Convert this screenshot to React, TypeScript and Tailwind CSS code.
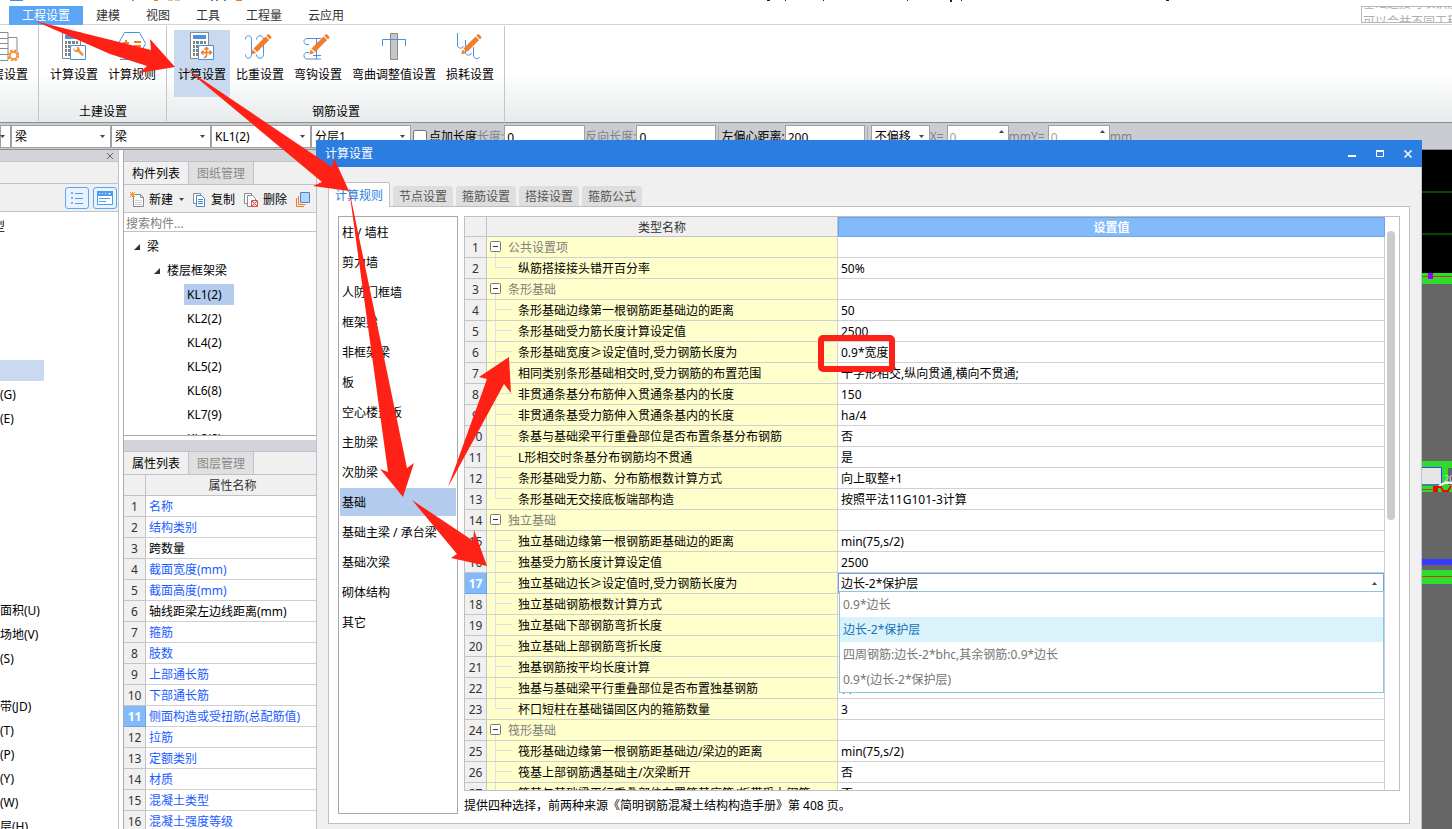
import { useState } from "react";
import type { ReactNode } from "react";

const menuTabs = ["工程设置", "建模", "视图", "工具", "工程量", "云应用"];

const moduleRows = [
    "构件类型", "", "", "", "", "", "selected", "(G)", "(E)", "", "", "", "", "", "", "",
    "面积(U)", "场地(V)", "(S)", "", "带(JD)", "(T)", "(P)", "(Y)", "(W)", "层(H)",
];

const components = ["KL1(2)", "KL2(2)", "KL4(2)", "KL5(2)", "KL6(8)", "KL7(9)", "KL8(8)"];

const properties = [
    { name: "名称", blue: true },
    { name: "结构类别", blue: true },
    { name: "跨数量", blue: false },
    { name: "截面宽度(mm)", blue: true },
    { name: "截面高度(mm)", blue: true },
    { name: "轴线距梁左边线距离(mm)", blue: false },
    { name: "箍筋", blue: true },
    { name: "肢数", blue: true },
    { name: "上部通长筋", blue: true },
    { name: "下部通长筋", blue: true },
    { name: "侧面构造或受扭筋(总配筋值)", blue: true },
    { name: "拉筋", blue: true },
    { name: "定额类别", blue: true },
    { name: "材质", blue: true },
    { name: "混凝土类型", blue: true },
    { name: "混凝土强度等级", blue: true },
];

const categories = [
    "柱 / 墙柱", "剪力墙", "人防门框墙", "框架梁", "非框架梁", "板", "空心楼盖板",
    "主肋梁", "次肋梁", "基础", "基础主梁 / 承台梁", "基础次梁", "砌体结构", "其它",
];

const dialogTabs = ["计算规则", "节点设置", "箍筋设置", "搭接设置", "箍筋公式"];

type Setting = { name: string; value?: string; group?: boolean; last?: boolean };

const settings: Setting[] = [
    { name: "公共设置项", group: true },
    { name: "纵筋搭接接头错开百分率", value: "50%", last: true },
    { name: "条形基础", group: true },
    { name: "条形基础边缘第一根钢筋距基础边的距离", value: "50" },
    { name: "条形基础受力筋长度计算设定值", value: "2500" },
    { name: "条形基础宽度≥设定值时,受力钢筋长度为", value: "0.9*宽度" },
    { name: "相同类别条形基础相交时,受力钢筋的布置范围", value: "十字形相交,纵向贯通,横向不贯通;" },
    { name: "非贯通条基分布筋伸入贯通条基内的长度", value: "150" },
    { name: "非贯通条基受力筋伸入贯通条基内的长度", value: "ha/4" },
    { name: "条基与基础梁平行重叠部位是否布置条基分布钢筋", value: "否" },
    { name: "L形相交时条基分布钢筋均不贯通", value: "是" },
    { name: "条形基础受力筋、分布筋根数计算方式", value: "向上取整+1" },
    { name: "条形基础无交接底板端部构造", value: "按照平法11G101-3计算", last: true },
    { name: "独立基础", group: true },
    { name: "独立基础边缘第一根钢筋距基础边的距离", value: "min(75,s/2)" },
    { name: "独基受力筋长度计算设定值", value: "2500" },
    { name: "独立基础边长≥设定值时,受力钢筋长度为" },
    { name: "独立基础钢筋根数计算方式" },
    { name: "独立基础下部钢筋弯折长度" },
    { name: "独立基础上部钢筋弯折长度" },
    { name: "独基钢筋按平均长度计算" },
    { name: "独基与基础梁平行重叠部位是否布置独基钢筋", value: "否" },
    { name: "杯口短柱在基础锚固区内的箍筋数量", value: "3", last: true },
    { name: "筏形基础", group: true },
    { name: "筏形基础边缘第一根钢筋距基础边/梁边的距离", value: "min(75,s/2)" },
    { name: "筏基上部钢筋遇基础主/次梁断开", value: "否" },
    { name: "筏基与基础梁平行重叠部位布置筏基底筋/板带受力钢筋", value: "否" },
];

const lengthOptions = ["0.9*边长", "边长-2*保护层", "四周钢筋:边长-2*bhc,其余钢筋:0.9*边长", "0.9*(边长-2*保护层)"];

function Caret({ className = "" }: { className?: string }) {
    return (
        <svg viewBox="0 0 5 3" className={`h-[3px] w-[5px] ${className}`} fill="#444">
            <path d="M0 0h5L2.5 3z" />
        </svg>
    );
}

function Pencil() {
    return (
        <g fill="#f07d2a">
            <path d="M8.500 17.500l12-12 3.600 3.600-12 12z" />
            <path d="M21.300 4.700l1.300-1.300a1 1 0 0 1 1.400 0l2.200 2.200a1 1 0 0 1 0 1.400l-1.300 1.300z" />
            <path d="M7.700 18.400l3.500 3.500-5 1.500z" />
        </g>
    );
}

function Calculator({ children }: { children: ReactNode }) {
    return (
        <g transform="translate(1 0)">
            <path d="M2.500 1.500h18v26h-18z" fill="#fff" stroke="#858b8e" />
            <path d="M5 4h13v4H5z" fill="#4a8fe2" />
            <path
                d="M5 10h2v3H5zM8 10h3v3H8zM12 10h3v3h-3zM16 10h2v3h-2zM5 14h2v3H5zM8 14h3v3H8zM5 18h2v3H5zM8 18h3v3H8zM5 22h2v3H5zM8 22h3v3H8z"
                fill="#7d8589"
            />
            <path d="M10.500 14.500h15v14h-15z" fill="#fff" stroke="#4a8fe2" />
            {children}
        </g>
    );
}

const ribbonIcons: Record<string, ReactNode> = {
    楼层设置: (
        <>
            <path d="M-2 1.500h21v28H-2M-2 7.500h21M-2 12.500h21M-2 17.500h21M-2 23.500h21M19 6.500h9v16" fill="none" stroke="#858b8e" />
            <circle cx="24.500" cy="24.500" r="5" fill="#fff" stroke="#f0923a" strokeWidth="2" strokeDasharray="2.500 1.400" />
            <circle cx="24.500" cy="24.500" r="3.600" fill="#fff" stroke="#f0923a" strokeWidth="1.600" />
        </>
    ),
    土建计算: (
        <Calculator>
            <path d="M13 17l2.200 2.200 1.800-.8.300-1.600-.9-.9c2.200-.4 3.800 1.200 3.400 3.200l3.500 3.600c1 1-.700 2.800-1.800 1.800l-3.500-3.500c-2.600.8-5.300-1.400-5-4z" fill="#f0923a" />
        </Calculator>
    ),
    计算规则: (
        <>
            <path d="M5.500 13.500l-4-1 6-11h15l6 11-6 12h-15z" fill="#fff" stroke="#4a8fe2" />
            <path d="M6 12h6M9 9v6M17 11h7M17 15h7" stroke="#f07d2a" strokeWidth="2" />
            <path d="M3 28.500h24" stroke="#4a8fe2" />
        </>
    ),
    钢筋计算: (
        <Calculator>
            <path
                d="M18.500 17v7.500q0 2-2.500 2M13.500 21.500h10M16.500 18.500l2-2 2 2M15.500 19.500l-2 2 2 2M21.500 19.500l2 2-2 2"
                fill="none"
                stroke="#f07d2a"
                strokeWidth="1.500"
            />
        </Calculator>
    ),
    比重设置: (
        <>
            <path
                d="M.500 8.500c0-5 6-5 6 0v15c0 5-6 5-6 0M18.500 8.500c0-5-7-5-7 0M18.500 14v9.500c0 5-7 5-7 0M18.500 8.500v5"
                fill="none"
                stroke="#4a8fe2"
            />
            <Pencil />
        </>
    ),
    弯钩设置: (
        <>
            <path
                d="M17 7.500H4c-4 0-4 6 0 6h2M6 21.500H4c-4 0-4 6.500 0 6.500h14M13.500 8v20M11 7.500h7M10 24.500h8"
                fill="none"
                stroke="#4a8fe2"
            />
            <Pencil />
        </>
    ),
    弯曲调整值设置: (
        <>
            <path d="M11.500 2.500h7v26h-7z" fill="#c3c7ca" stroke="#858b8e" />
            <path d="M3.500 15V8.500h23V15" fill="none" stroke="#4a8fe2" />
        </>
    ),
    损耗设置: (
        <>
            <path
                d="M2.500 2v12c0 4 5 4 6 1M10.500 9v12c0 4 5 4 6 1M18.500 16v8c0 4 5 5 6 2"
                fill="none"
                stroke="#4a8fe2"
            />
            <Pencil />
        </>
    ),
};

function RibbonButton({ icon, label, active }: { icon: string; label: string; active?: boolean }) {
    return (
        <button className={`flex h-[67px] shrink-0 flex-col items-center px-1 ${active ? "bg-[#c9d9ef]" : ""}`}>
            <svg viewBox="0 0 30 30" className="mt-px h-[30px] w-[30px]">
                {ribbonIcons[icon]}
            </svg>
            <span className="mt-[6px] leading-4">{label}</span>
        </button>
    );
}

function RibbonGroup({ title, children }: { title: string; children: ReactNode }) {
    return (
        <section className="flex shrink-0 flex-col border-r border-[#c4c6c8] pt-1 pr-[6px] pl-[7px]">
            <div className="flex gap-[2px]">{children}</div>
            <h2 className="mt-auto pb-px text-center leading-4">{title}</h2>
        </section>
    );
}

function ToolSelect({ label, value, width }: { label: string; value: string; width: string }) {
    return (
        <div className={`relative h-[23px] shrink-0 ${width}`}>
            <select aria-label={label} className="h-full w-full appearance-none border border-[#a0a0a0] bg-white pt-[2px] pl-[3px]">
                <option>{value}</option>
            </select>
            <Caret className="pointer-events-none absolute top-[10px] right-[6px]" />
        </div>
    );
}

function ToolInput({ label, value, width, muted, spin }: { label: string; value: string; width: string; muted?: boolean; spin?: boolean }) {
    return (
        <label className="flex shrink-0 items-center">
            <span className={`pt-[2px] ${muted ? "text-[#808488]" : ""} ${spin ? "pr-[3px]" : ""}`}>{label}</span>
            <span className={`relative h-[23px] ${width}`}>
                <input
                    defaultValue={value}
                    className={`h-full w-full border border-[#a0a0a0] bg-white pt-[2px] pl-[2px] ${spin ? "text-[#a0a0a0]" : ""}`}
                />
                {spin && <Caret className="absolute top-[5px] right-[5px] rotate-180" />}
            </span>
        </label>
    );
}

function PanelTabs({ tabs }: { tabs: string[] }) {
    return (
        <div role="tablist" className="flex h-[23px] shrink-0 border-b border-[#bfc2c8] bg-[#f0f0f0]">
            {tabs.map((tab, i) => (
                <button
                    key={tab}
                    role="tab"
                    aria-selected={i === 0}
                    className={`px-2 pt-[2px] ${i === 0 ? "" : "border-x border-[#bfc2c8] bg-[#e0e0e0] text-[#8a8a8a]"}`}
                >
                    {tab}
                </button>
            ))}
        </div>
    );
}

function ModulePane() {
    return (
        <aside className="w-[119px] shrink-0 overflow-hidden border-r border-[#bfc2c8] bg-white">
            <div className="flex h-3 items-center justify-end border-b border-[#bfc2c8] bg-[#d2d4d9] pr-[5px]">
                <button aria-label="关闭">
                    <svg viewBox="0 0 6 6" className="h-[6px] w-[6px]" stroke="#666">
                        <path d="M0 0l6 6M6 0L0 6" />
                    </svg>
                </button>
            </div>
            <div className="h-[22px] border-b border-[#bfc2c8] bg-[#f0f0f0]" />
            <div className="flex h-7 items-center justify-end gap-1 border-b border-[#bfc2c8] bg-[#f0f0f0] pr-[1px]">
                <button aria-label="列表" className="flex h-[22px] w-6 items-center justify-center rounded-[3px] border border-[#5aa5f5] bg-[#e8f3ff]">
                    <svg viewBox="0 0 14 14" className="h-[14px] w-[14px]" stroke="#4a9bf0" fill="none">
                        <path d="M5 2.500h8M5 7.500h8M5 12.500h8" />
                        <path d="M1.500 1.500h1v1h-1zM1.500 6.500h1v1h-1zM1.500 11.500h1v1h-1z" />
                    </svg>
                </button>
                <button aria-label="窗口" className="flex h-[22px] w-6 items-center justify-center rounded-[3px] border border-[#5aa5f5] bg-[#e8f3ff]">
                    <svg viewBox="0 0 16 14" className="h-[14px] w-4">
                        <path d="M.500.500h15v13H.500z" fill="#fff" stroke="#4a9bf0" />
                        <path d="M0 0h16v5H0z" fill="#4a9bf0" />
                        <path d="M2 2h1v1H2zM5 2h1v1H5zM8 2h1v1H8zM11 2h3l-1.500 2z" fill="#fff" />
                        <path d="M2 7.500h11M2 10.500h7" stroke="#4a9bf0" />
                    </svg>
                </button>
            </div>
            <ul className="pt-[2px]">
                {moduleRows.map((row, i) => (
                    <li key={i} className={`flex h-6 items-center ${row === "selected" ? "" : "pt-[2px]"}`}>
                        {row === "selected" ? (
                            <span className="h-[21px] w-11 bg-[#c9d9ef]" />
                        ) : i === 0 ? (
                            <span className="flex w-[5px] justify-end overflow-hidden whitespace-nowrap">{row}</span>
                        ) : (
                            row
                        )}
                    </li>
                ))}
            </ul>
        </aside>
    );
}

function TreeArrow() {
    return (
        <svg viewBox="0 0 6 6" className="h-[6px] w-[6px]" fill="#333">
            <path d="M6 0v6H0z" />
        </svg>
    );
}

function ComponentPanel() {
    const [selected, setSelected] = useState("KL1(2)");

    return (
        <section className="flex h-[286px] shrink-0 flex-col border-b border-[#a8a8a8]">
            <div className="h-3 shrink-0 border-b border-[#bfc2c8] bg-[#d2d4d9]" />
            <PanelTabs tabs={["构件列表", "图纸管理"]} />
            <div className="flex h-7 shrink-0 items-center overflow-hidden border-b border-[#bfc2c8] bg-[#f0f0f0] pt-[2px] pl-[6px] whitespace-nowrap">
                <button className="flex items-center gap-1">
                    <svg viewBox="0 0 15 15" className="h-[15px] w-[15px]" fill="none">
                        <path d="M3.500 2.500h7l3 3v9h-10z" fill="#fff" stroke="#858b8e" />
                        <path d="M10.500 2.500v3h3" stroke="#858b8e" />
                        <path d="M5 8.500h7M5 10.500h7M5 12.500h7" stroke="#d0d0d0" />
                        <path d="M0 0l5 5M5 0L0 5M2.500 0v5M0 2.500h5" stroke="#f09a2a" />
                    </svg>
                    新建
                </button>
                <Caret className="mr-[9px] ml-[6px]" />
                <button className="flex items-center gap-[5px]">
                    <svg viewBox="0 0 13 14" className="h-[14px] w-[13px]" stroke="#4a86d0" fill="#fff">
                        <path d="M.500.500h7v10h-7z" stroke="#858b8e" />
                        <path d="M3.500 2.500h5l3 3v8h-8z" />
                        <path d="M5 6.500h5M5 8.500h5M5 10.500h5" />
                    </svg>
                    复制
                </button>
                <button className="ml-[9px] flex items-center gap-[5px]">
                    <svg viewBox="0 0 14 14" className="h-[14px] w-[14px]" stroke="#858b8e" fill="#fff">
                        <path d="M.500.500h7v10h-7z" />
                        <path d="M3.500 2.500h5l3 3v8h-8z" />
                        <path d="M7.500 7.500h6v6h-6z" stroke="#d9534f" fill="#fbe3e1" />
                        <path d="M8 8l5 5M13 8l-5 5" stroke="#d9534f" />
                    </svg>
                    删除
                </button>
                <button aria-label="层间复制" className="ml-[9px]">
                    <svg viewBox="0 0 14 15" className="h-[15px] w-[14px]" fill="none">
                        <path d="M.500 6v8.500H8M2.500 4v8.500h7" stroke="#f07d2a" />
                        <path d="M4.500.500h9v10h-9z" fill="#b5d5fb" stroke="#4a86d0" />
                    </svg>
                </button>
            </div>
            <input
                aria-label="搜索构件"
                placeholder="搜索构件..."
                className="h-[19px] shrink-0 border-b border-[#bfc2c8] bg-white pt-[2px] pl-[2px] placeholder:text-[#808080]"
            />
            <div className="min-h-0 flex-1 overflow-hidden bg-white pt-[2px]">
                <div className="flex h-6 items-center gap-[7px] pt-[2px] pl-[10px]">
                    <TreeArrow />梁
                </div>
                <div className="flex h-6 items-center gap-[7px] pt-[2px] pl-[30px]">
                    <TreeArrow />
                    楼层框架梁
                </div>
                {components.map((name) => (
                    <div key={name} className="flex h-6 items-center pl-[60px]">
                        <button
                            onClick={() => setSelected(name)}
                            className={`h-[21px] w-[50px] pt-[2px] pl-[3px] text-left ${selected === name ? "bg-[#b3cced]" : ""}`}
                        >
                            {name}
                        </button>
                    </div>
                ))}
            </div>
        </section>
    );
}

function PropertyPanel() {
    return (
        <section className="mt-1 min-h-0 flex-1 overflow-hidden">
            <div className="h-3 border-b border-[#bfc2c8] bg-[#d2d4d9]" />
            <PanelTabs tabs={["属性列表", "图层管理"]} />
            <table className="w-full table-fixed border-separate border-spacing-0">
                <thead>
                    <tr className="h-[21px] bg-[#f0f0f0] text-[#333]">
                        <th className="w-[22px] border-r border-b border-[#bfc2c8] p-0" />
                        <th className="border-b border-[#bfc2c8] p-0 pt-[2px] font-normal">属性名称</th>
                    </tr>
                </thead>
                <tbody>
                    {properties.map((p, i) => (
                        <tr key={p.name} className="h-[21px]">
                            <th
                                className={`border-r border-b p-0 pt-[2px] ${
                                    i === 10
                                        ? "border-[#6ba5e7] bg-[#82bafb] font-bold text-white"
                                        : "border-[#c4c4c4] bg-[#f0f0f0] font-normal text-[#333]"
                                }`}
                            >
                                {i + 1}
                            </th>
                            <td className={`border-b border-[#d0d0d0] bg-white p-0 pt-[2px] pl-[3px] whitespace-nowrap ${p.blue ? "text-[#1a5cff]" : ""}`}>
                                {p.name}
                            </td>
                        </tr>
                    ))}
                </tbody>
            </table>
        </section>
    );
}

function DrawingCanvas() {
    return (
        <main className="relative flex-1 overflow-hidden bg-[#666]">
            <svg viewBox="0 0 30 680" className="absolute top-0 right-0 h-[680px] w-[30px]">
                <path d="M0 0h30v123H0z" fill="#000" />
                <path d="M0 42h30M0 84h30" stroke="#004a00" strokeWidth="2" />
                <path d="M0 123h30v11H0z" fill="#2ddc2d" />
                <path d="M0 126.500h30" stroke="#c83a10" />
                <path d="M6 123h5v6H6z" fill="#9a00ff" />
                <path d="M0 311h30v31H0z" fill="#2ddc2d" />
                <path d="M26 318h4v17h-4z" fill="#666" />
                <path d="M0 318h19v16H0z" fill="#e6e6e6" />
                <path d="M0 317.500h19.500v17.500H0" fill="none" stroke="#3a3aff" />
                <path d="M0 339.500h11" stroke="#c83a10" />
                <text x="22" y="332" fontSize="9" fill="#ddd">20</text>
                <path d="M17 336q5-4 13-3" fill="none" stroke="#fff" strokeWidth="2" />
                <path d="M11 336h5v6h-5z" fill="#f00" />
                <path d="M14 337h5l2 4h5l3-5" fill="none" stroke="#f00" strokeWidth="2" />
                <path d="M0 409h30v6H0z" fill="#3a3aff" />
                <path d="M0 420h30v14H0z" fill="#2ddc2d" />
                <path d="M0 426.500h30" stroke="#c83a10" />
            </svg>
        </main>
    );
}

function LengthSelect() {
    const [value, setValue] = useState(lengthOptions[1]);

    return (
        <div className="relative h-5">
            <select
                aria-label="受力钢筋长度"
                value={value}
                onChange={(e) => setValue(e.target.value)}
                className="h-5 w-full appearance-none border border-[#6ba5e7] bg-white pt-[2px] pl-[2px]"
            >
                {lengthOptions.map((option) => (
                    <option key={option}>{option}</option>
                ))}
            </select>
            <Caret className="pointer-events-none absolute top-[9px] right-[7px] rotate-180" />
            <ul role="listbox" className="absolute top-[18px] right-0 left-px z-10 border border-[#8cc6de] bg-white text-[#757575]">
                {lengthOptions.map((option) => (
                    <li
                        key={option}
                        role="option"
                        aria-selected={option === value}
                        onClick={() => setValue(option)}
                        className={`flex h-[25px] items-center pl-[3px] ${option === value ? "bg-[#daf2fa] text-[#1273b9]" : ""}`}
                    >
                        {option}
                    </li>
                ))}
            </ul>
        </div>
    );
}

function SettingsTable() {
    return (
        <div className="flex min-h-0 flex-1 overflow-hidden border border-[#bfbfbf] bg-white">
            <div className="min-w-0 flex-1">
                <table className="w-full table-fixed border-separate border-spacing-0">
                    <thead>
                        <tr className="h-5 text-[#333]">
                            <th className="w-[22px] border-r border-b border-[#c4c4c4] bg-[#f0f0f0] p-0" />
                            <th className="w-[351px] border-r border-b border-[#c4c4c4] bg-[#f0f0f0] p-0 pt-[2px] font-normal">类型名称</th>
                            <th className="border border-[#6ba5e7] bg-[#82bafb] p-0 pt-px font-bold text-white">设置值</th>
                        </tr>
                    </thead>
                    <tbody>
                        {settings.map((s, i) => (
                            <tr key={s.name} className="h-[21px]">
                                <th
                                    className={`border-r border-b p-0 pt-[2px] ${
                                        i === 16
                                            ? "border-[#6ba5e7] bg-[#82bafb] font-bold text-white"
                                            : "border-[#c4c4c4] bg-[#f0f0f0] font-normal text-[#333]"
                                    }`}
                                >
                                    {i + 1}
                                </th>
                                <td className="border-r border-b border-[#d0d0d0] bg-[#ffffcc] p-0">
                                    <div className="flex h-5 items-center whitespace-nowrap">
                                        <svg viewBox="0 0 31 20" className="h-5 w-[31px] shrink-0" fill="none">
                                            {s.group ? (
                                                <>
                                                    <path d="M8.500 15v5" stroke="#e0e0e0" />
                                                    <rect x="3.500" y="4.500" width="10" height="10" rx="1" fill="#fff" stroke="#777" />
                                                    <path d="M6 9.500h5" stroke="#333" />
                                                </>
                                            ) : (
                                                <path d={s.last ? "M8.500 0v9.500H25" : "M8.500 0v20M8.500 9.500H25"} stroke="#e0e0e0" />
                                            )}
                                        </svg>
                                        <span className={`pt-[2px] ${s.group ? "-ml-[10px] text-[#808080]" : ""}`}>{s.name}</span>
                                    </div>
                                </td>
                                <td className={`border-r border-b border-[#d0d0d0] p-0 whitespace-nowrap ${i === 16 ? "" : "pt-[2px] pl-[3px]"}`}>
                                    {i === 16 ? <LengthSelect /> : s.value}
                                </td>
                            </tr>
                        ))}
                    </tbody>
                </table>
            </div>
            <div className="w-[14px] shrink-0 pt-[14px] pl-[2px]">
                <div className="h-[289px] w-2 rounded-full bg-[#cbcbcb]" />
            </div>
        </div>
    );
}

function SettingsDialog() {
    const [category, setCategory] = useState("基础");

    return (
        <div
            role="dialog"
            aria-label="计算设置"
            className="absolute top-[140px] right-[30px] bottom-0 left-[316px] flex flex-col border-x border-[#bcc3cf] bg-[#f0f0f0]"
        >
            <header className="-mx-px flex h-[27px] shrink-0 items-center bg-[#2b7de1] pr-[9px] pl-[9px] text-white">
                <h1 className="flex-1">计算设置</h1>
                <div className="flex gap-[18px]">
                    <button aria-label="最小化">
                        <svg viewBox="0 0 10 10" className="h-[10px] w-[10px]" stroke="#fff" strokeWidth="2">
                            <path d="M1 7h8" />
                        </svg>
                    </button>
                    <button aria-label="最大化">
                        <svg viewBox="0 0 10 10" className="h-[10px] w-[10px]" fill="none" stroke="#fff">
                            <path d="M1.500 2.500h7v5h-7zM1 1.500h8" />
                        </svg>
                    </button>
                    <button aria-label="关闭">
                        <svg viewBox="0 0 10 10" className="h-[10px] w-[10px]" stroke="#fff" strokeWidth="1.500">
                            <path d="M1.500 1.500l7 7M8.500 1.500l-7 7" />
                        </svg>
                    </button>
                </div>
            </header>
            <div className="flex min-h-0 flex-1 flex-col pt-[15px] pr-[11px] pb-[5px] pl-[11px]">
                <div role="tablist" className="flex shrink-0 items-end gap-[3px]">
                    {dialogTabs.map((tab, i) => (
                        <button
                            key={tab}
                            role="tab"
                            aria-selected={i === 0}
                            className={
                                i === 0
                                    ? "relative z-10 -mb-px h-[25px] rounded-t-[2px] border border-b-0 border-[#bfbfbf] bg-white px-[6px] pt-px text-[#2b7de1]"
                                    : "h-5 rounded-t-[3px] bg-[#dedede] px-[6px] pt-[2px] text-[#555]"
                            }
                        >
                            {tab}
                        </button>
                    ))}
                </div>
                <div className="flex min-h-0 flex-1 gap-[6px] border border-[#bfbfbf] bg-white p-[9px]">
                    <ul className="w-[120px] shrink-0 border border-[#a8a8a8]">
                        {categories.map((c) => (
                            <li key={c} className="flex h-[30px] items-center px-px">
                                <button
                                    onClick={() => setCategory(c)}
                                    className={`h-7 w-full pt-[2px] pl-[2px] text-left whitespace-nowrap ${category === c ? "bg-[#b3cced]" : ""}`}
                                >
                                    {c}
                                </button>
                            </li>
                        ))}
                    </ul>
                    <div className="flex min-w-0 flex-1 flex-col">
                        <SettingsTable />
                        <p className="h-[23px] shrink-0 pt-[7px] leading-4">提供四种选择，前两种来源《简明钢筋混凝土结构构造手册》第 408 页。</p>
                    </div>
                </div>
            </div>
        </div>
    );
}

/* Red guide arrows drawn over the whole window */
function Annotations() {
    return (
        <svg viewBox="0 0 1452 829" className="pointer-events-none absolute top-0 left-0 z-20 h-[829px] w-[1452px] max-w-none" fill="#ff2115">
            <path d="M35 21L151 50L150 39L175 67L139 73L147 66L110 54z" />
            <path d="M185 68L332 167L334 158L349 191L313 186L322 182z" />
            <path d="M349 189L407 468L414 463L403 497L380 469L388 472z" />
            <path d="M448 487L487 379L479 377L509 357L511 393L504 384z" />
            <path d="M412 500L466 536L473 541L474 530L487 566L451 558L457 554z" />
            <rect x="821" y="338" width="71" height="31" rx="2" fill="none" stroke="#ff2115" strokeWidth="6" />
        </svg>
    );
}

export default function App() {
    return (
        <div className="relative flex h-screen w-full flex-col overflow-hidden bg-white font-['Noto_Sans','Noto_Sans_CJK_SC',sans-serif] text-[12px] leading-4 text-black">
            <header className="flex h-[25px] shrink-0 items-end justify-between border-b border-[#d4d4d4] bg-white">
                <svg viewBox="0 0 1200 6" className="absolute top-0 left-0 h-[6px] w-[1200px]">
                    <path d="M10 0h13v1H10z" fill="#4a8fe2" />
                    <path d="M132 0h2v1h-2zM154 0h4v1h-4zM236 0h6v1h-6z" fill="#e87a20" />
                    <path d="M168 0h5v1h-5zM175 0h5v1h-5z" fill="#f5b98c" />
                    <path d="M211 0h2v1h-2zM216 0h2v1h-2zM224 0h2v1h-2z" fill="#5a7fb8" />
                    <path d="M767 0h3v1h-3zM785 0h1v1h-1zM823 0h1v1h-1zM907 0h1v1h-1zM950 0h2v2h-2zM961 0h1v1h-1zM1166 0h3v1h-3z" fill="#222" />
                </svg>
                <nav className="-mb-px flex h-[19px] pl-[9px]">
                    {menuTabs.map((tab, i) => (
                        <button key={tab} className={`px-[13px] pt-px ${i === 0 ? "bg-[#5aa5f5] text-white" : "text-[#333]"}`}>
                            {tab}
                        </button>
                    ))}
                </nav>
                <div className="mb-[1px] h-[17px] w-[91px] overflow-hidden border border-r-0 border-[#b8b8b8] pl-px text-[#b0b0b0]">
                    <p className="-mt-[12px] leading-[18px] whitespace-nowrap">
                        基础连接可以识别
                        <br />
                        可以合并不同工程
                    </p>
                </div>
            </header>

            <div className="flex h-[98px] shrink-0 border-b border-[#8a8e90] bg-linear-to-b from-white from-50% to-[#e7ebeb] py-px">
                <div className="flex w-[39px] shrink-0 justify-end overflow-hidden border-r border-[#c4c6c8] pt-1 pr-[6px]">
                    <RibbonButton icon="楼层设置" label="楼层设置" />
                </div>
                <RibbonGroup title="土建设置">
                    <RibbonButton icon="土建计算" label="计算设置" />
                    <RibbonButton icon="计算规则" label="计算规则" />
                </RibbonGroup>
                <RibbonGroup title="钢筋设置">
                    <RibbonButton icon="钢筋计算" label="计算设置" active />
                    <RibbonButton icon="比重设置" label="比重设置" />
                    <RibbonButton icon="弯钩设置" label="弯钩设置" />
                    <RibbonButton icon="弯曲调整值设置" label="弯曲调整值设置" />
                    <RibbonButton icon="损耗设置" label="损耗设置" />
                </RibbonGroup>
            </div>

            <div className="flex h-[27px] shrink-0 items-center overflow-hidden border-b border-[#8a8e90] bg-[#c9ccd1] whitespace-nowrap">
                <ToolSelect label="楼层" value="" width="w-[11px]" />
                <ToolSelect label="构件大类" value="梁" width="w-[100px]" />
                <ToolSelect label="构件类型" value="梁" width="w-[100px]" />
                <ToolSelect label="构件" value="KL1(2)" width="w-[100px]" />
                <ToolSelect label="分层" value="分层1" width="w-[100px]" />
                <label className="ml-[2px] flex items-center gap-[2px] pt-[2px]">
                    <input type="checkbox" className="h-[14px] w-[14px] appearance-none rounded-[2px] border border-[#777] bg-white" />
                    点加长度
                </label>
                <ToolInput label="长度:" value="0" width="w-[81px]" muted />
                <ToolInput label="反向长度:" value="0" width="w-[80px]" muted />
                <span className="mx-[2px] h-5 w-px bg-[#a8abb0]" />
                <ToolInput label="左偏心距离:" value="200" width="w-[80px]" />
                <span className="mr-[3px] ml-[2px] h-5 w-px bg-[#a8abb0]" />
                <ToolSelect label="偏移" value="不偏移" width="w-[59px]" />
                <ToolInput label="X=" value="0" width="w-[62px]" muted spin />
                <ToolInput label="mmY=" value="0" width="w-[62px]" muted spin />
                <span className="pt-[2px] text-[#808488]">mm</span>
            </div>

            <div className="flex min-h-0 flex-1">
                <ModulePane />
                <div className="ml-1 flex w-[196px] shrink-0 flex-col border-l border-[#a8abb0]">
                    <ComponentPanel />
                    <PropertyPanel />
                </div>
                <DrawingCanvas />
            </div>

            <SettingsDialog />
            <Annotations />
        </div>
    );
}
